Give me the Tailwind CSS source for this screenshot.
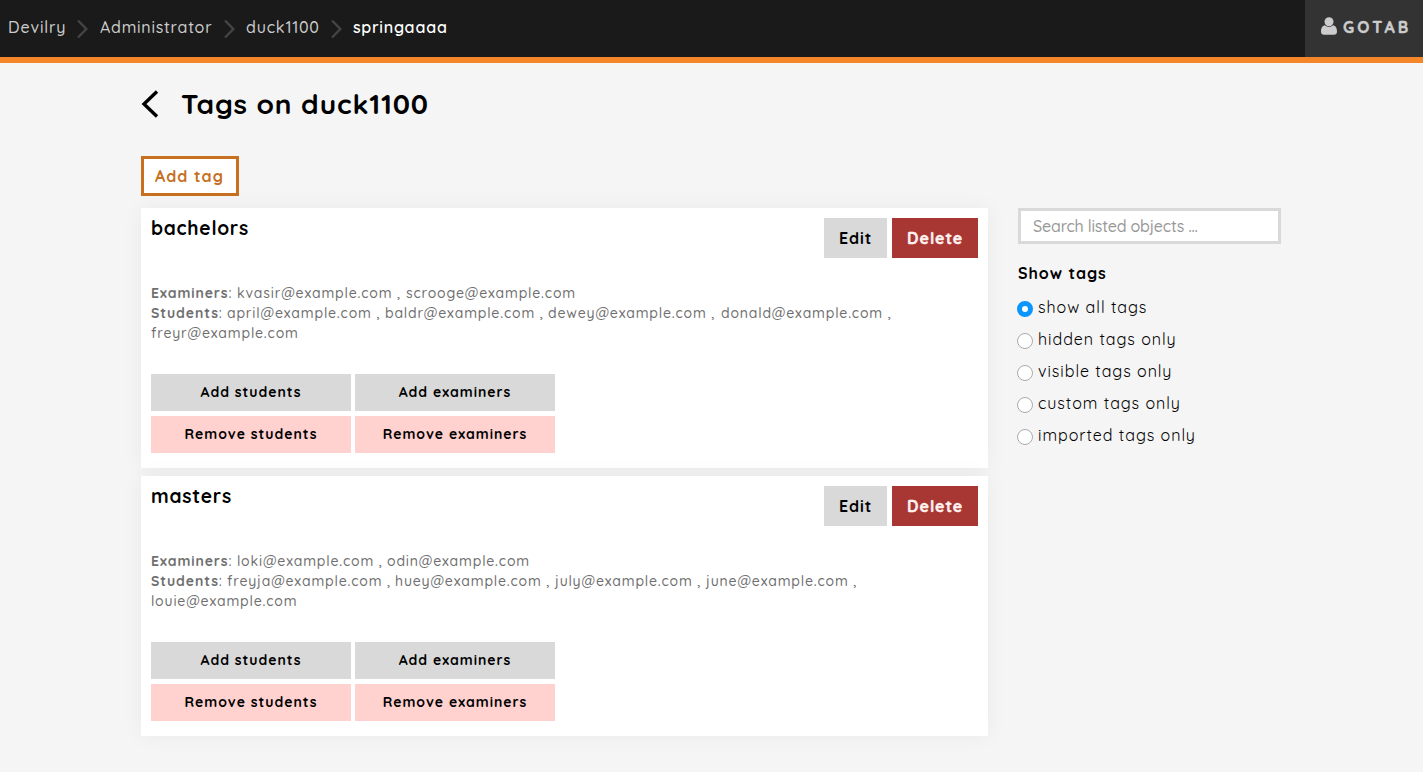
<!DOCTYPE html>
<html lang="en">
<head>
<meta charset="utf-8">
<title>Tags on duck1100</title>
<script src="https://cdn.jsdelivr.net/npm/@tailwindcss/browser@4"></script>
</head>
<body class="min-h-screen bg-[#f5f5f5] font-[Quicksand,Lato,sans-serif] text-base text-black">
<header class="flex h-[63px] justify-between border-b-6 border-[#f58529] bg-[#1a1a1a]">
  <nav class="flex items-center pb-[3px] pl-2 font-medium whitespace-nowrap text-[#cccccc]">
    <a class="w-[69px] tracking-[0.85px]">Devilry</a>
    <svg class="mt-[3px] mr-[11px] h-5 w-[11px]" viewBox="0 0 11 20" fill="none" stroke="#444" stroke-width="2.4"><path d="M1 1.5 9.3 10 1 18.5"/></svg>
    <a class="w-[125px] pl-px tracking-[0.75px]">Administrator</a>
    <svg class="mt-[3px] mr-[11px] h-5 w-[11px]" viewBox="0 0 11 20" fill="none" stroke="#444" stroke-width="2.4"><path d="M1 1.5 9.3 10 1 18.5"/></svg>
    <a class="w-[85px] tracking-[0.76px]">duck1100</a>
    <svg class="mt-[3px] mr-[11px] h-5 w-[11px]" viewBox="0 0 11 20" fill="none" stroke="#444" stroke-width="2.4"><path d="M1 1.5 9.3 10 1 18.5"/></svg>
    <span class="font-semibold tracking-[0.7px] text-white">springaaaa</span>
  </nav>
  <a class="flex w-[118px] items-center bg-[#333333] pb-[3px] pl-4 text-[#cccccc]">
    <svg class="mr-[6px] mb-[3px] h-[18px] w-4 shrink-0" viewBox="0 0 16 18" fill="#ccc"><circle cx="8" cy="4.7" r="4.5"/><path d="M4 8.3C1.2 8.7 0 11.5 0 14.5 0 16.6 1.2 17.8 3 17.8H13c1.800 0 3-1.200 3-3.300 0-3-1.200-5.800-4-6.200C10.900 9.400 9.500 10 8 10S5.100 9.400 4 8.300Z"/></svg>
    <span class="font-black tracking-[3.1px] [-webkit-text-stroke:0.4px_#ccc]">GOTAB</span>
  </a>
</header>
<main class="ml-[141px] w-[1140px]">
  <div class="flex h-20 items-center">
    <svg class="mt-px mr-[22px] h-7 w-[18px]" viewBox="0 0 18 28" fill="none" stroke="#000" stroke-width="3.4"><path d="M16 1.500 3 14 16 26.500"/></svg>
    <h1 class="pt-px text-[28px] font-bold tracking-[0.84px]">Tags on duck1100</h1>
  </div>
  <a class="mt-[13px] flex h-10 w-[98px] items-center border-3 border-[#c7701f] bg-white pl-[11px] font-bold tracking-[1.05px] whitespace-nowrap text-[#c7701f]">Add tag</a>
  <div class="mt-3 flex items-start gap-[30px]">
    <div class="flex w-[847px] flex-col gap-2">
      <section class="h-[260px] bg-white p-[10px] shadow-[0_0_20px_rgba(0,0,0,0.05)]">
        <div class="flex h-[65px] items-start justify-between">
          <h2 class="text-[19.2px] leading-[20px] font-bold tracking-[0.75px]">bachelors</h2>
          <div class="flex gap-[5px] font-bold whitespace-nowrap">
            <a class="flex h-10 w-[63px] items-center bg-[#d9d9d9] pl-[15px] tracking-[0.95px]">Edit</a>
            <a class="flex h-10 w-[86px] items-center bg-[#a83733] pl-[15px] tracking-[0.95px] text-[#fff0f0] [-webkit-text-stroke:0.4px_#fff0f0]">Delete</a>
          </div>
        </div>
        <div class="text-sm/5 font-medium tracking-[0.84px] whitespace-nowrap text-[#6f6f6f]">
          <p class="flex"><span class="w-[86px] tracking-[0.92px]"><b>Examiners</b>:</span><span class="w-[169px]">kvasir@example.com ,</span><span>scrooge@example.com</span></p>
          <p class="flex"><span class="w-[76px] tracking-[0.92px]"><b>Students</b>:</span><span class="w-[158px]">april@example.com ,</span><span class="w-[163px]">baldr@example.com ,</span><span class="w-[173px]">dewey@example.com ,</span><span>donald@example.com ,</span></p>
          <p>freyr@example.com</p>
        </div>
        <div class="mt-[31px] grid w-[404px] grid-cols-2 gap-x-1 gap-y-[5px] text-center text-sm leading-[36px] font-bold tracking-[0.98px]">
          <a class="h-[37px] bg-[#d9d9d9]">Add students</a><a class="h-[37px] bg-[#d9d9d9]">Add examiners</a>
          <a class="h-[37px] bg-[#ffd1cf]">Remove students</a><a class="h-[37px] bg-[#ffd1cf]">Remove examiners</a>
        </div>
      </section>
      <section class="h-[260px] bg-white p-[10px] shadow-[0_0_20px_rgba(0,0,0,0.05)]">
        <div class="flex h-[65px] items-start justify-between">
          <h2 class="text-[19.2px] leading-[20px] font-bold tracking-[0.75px]">masters</h2>
          <div class="flex gap-[5px] font-bold whitespace-nowrap">
            <a class="flex h-10 w-[63px] items-center bg-[#d9d9d9] pl-[15px] tracking-[0.95px]">Edit</a>
            <a class="flex h-10 w-[86px] items-center bg-[#a83733] pl-[15px] tracking-[0.95px] text-[#fff0f0] [-webkit-text-stroke:0.4px_#fff0f0]">Delete</a>
          </div>
        </div>
        <div class="text-sm/5 font-medium tracking-[0.84px] whitespace-nowrap text-[#6f6f6f]">
          <p class="flex"><span class="w-[86px] tracking-[0.92px]"><b>Examiners</b>:</span><span class="w-[150px]">loki@example.com ,</span><span>odin@example.com</span></p>
          <p class="flex"><span class="w-[76px] tracking-[0.92px]"><b>Students</b>:</span><span class="w-[168px]">freyja@example.com ,</span><span class="w-[160px]">huey@example.com ,</span><span class="w-[151px]">july@example.com ,</span><span>june@example.com ,</span></p>
          <p>louie@example.com</p>
        </div>
        <div class="mt-[31px] grid w-[404px] grid-cols-2 gap-x-1 gap-y-[5px] text-center text-sm leading-[36px] font-bold tracking-[0.98px]">
          <a class="h-[37px] bg-[#d9d9d9]">Add students</a><a class="h-[37px] bg-[#d9d9d9]">Add examiners</a>
          <a class="h-[37px] bg-[#ffd1cf]">Remove students</a><a class="h-[37px] bg-[#ffd1cf]">Remove examiners</a>
        </div>
      </section>
    </div>
    <aside class="w-[263px]">
      <div class="flex h-9 items-center border-3 border-[#d9d9d9] bg-white pl-3 font-medium tracking-[-0.2px] text-[#999999]">Search listed objects ...</div>
      <h3 class="mt-[17px] leading-6 font-bold tracking-[0.96px]">Show tags</h3>
      <div class="mt-[6px] -ml-px flex flex-col tracking-[0.98px]">
        <label class="flex h-8 items-center gap-[5px]"><span class="mt-[3px] size-4 rounded-full border-5 border-[#0a95ff] bg-white"></span>show all tags</label>
        <label class="flex h-8 items-center gap-[5px]"><span class="mt-[3px] size-4 rounded-full border border-[#ababab] bg-white"></span>hidden tags only</label>
        <label class="flex h-8 items-center gap-[5px]"><span class="mt-[3px] size-4 rounded-full border border-[#ababab] bg-white"></span>visible tags only</label>
        <label class="flex h-8 items-center gap-[5px]"><span class="mt-[3px] size-4 rounded-full border border-[#ababab] bg-white"></span>custom tags only</label>
        <label class="flex h-8 items-center gap-[5px]"><span class="mt-[3px] size-4 rounded-full border border-[#ababab] bg-white"></span>imported tags only</label>
      </div>
    </aside>
  </div>
</main>
</body>
</html>
